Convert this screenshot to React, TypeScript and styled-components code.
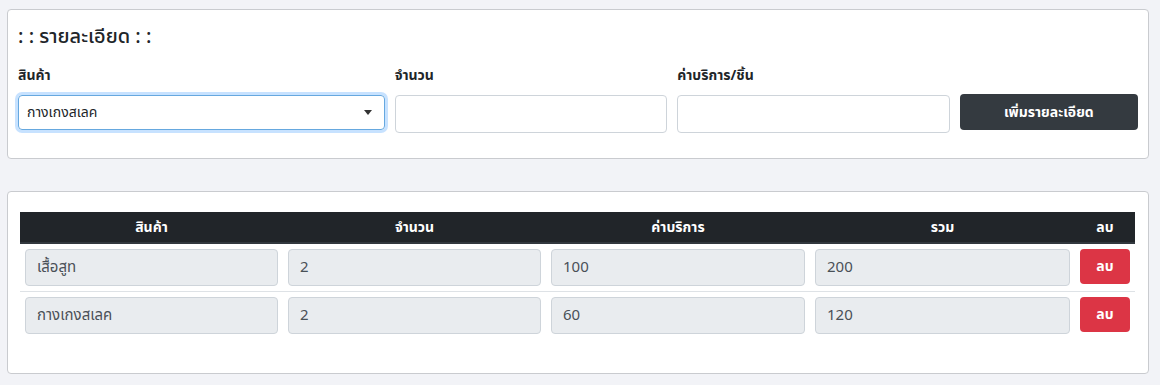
import React from "react";
import styled, { createGlobalStyle } from "styled-components";

const GlobalStyle = createGlobalStyle`
  * { box-sizing: border-box; }
  html, body { margin: 0; padding: 0; background: #f2f3f7; }
  body {
    font-family: "Noto Sans Thai", "Noto Sans", "Liberation Sans", sans-serif;
    color: #212529;
  }
`;

const Page = styled.div`
  padding: 9px 11px 0 7px;
  width: 1160px;
`;

const Card = styled.section<{ $pad: string; $mt?: number }>`
  background: #fff;
  border: 1px solid #c9cbcf;
  border-radius: 4px;
  padding: ${(p) => p.$pad};
  margin-top: ${(p) => p.$mt ?? 0}px;
`;

const Title = styled.h5`
  margin: 0 0 15px 5px;
  font-size: 20px;
  line-height: 27px;
  font-weight: 500;
  color: #212529;
`;

const FormRow = styled.div`
  display: flex;
  align-items: flex-start;
`;

const Col = styled.div<{ $w: number }>`
  flex: 0 0 ${(p) => p.$w}%;
  max-width: ${(p) => p.$w}%;
  padding: 0 5px;
`;

const Label = styled.label`
  display: block;
  font-size: 14px;
  font-weight: 700;
  line-height: 20px;
  margin-bottom: 9px;
  color: #212529;
`;

const SelectBox = styled.div`
  height: 35px;
  border: 1px solid #66a8df;
  border-radius: 4px;
  box-shadow: 0 0 0 3px rgba(0, 123, 255, 0.22);
  display: flex;
  align-items: center;
  padding: 0 12px 0 8px;
  font-size: 14px;
  color: #212529;
`;

const SelectText = styled.span`
  flex: 1;
`;

const Caret = styled.span`
  width: 0;
  height: 0;
  border-left: 4px solid transparent;
  border-right: 4px solid transparent;
  border-top: 5px solid #333;
`;

const TextInput = styled.input`
  display: block;
  width: 100%;
  height: 38px;
  border: 1px solid #ced4da;
  border-radius: 4px;
  background: #fff;
  padding: 0 12px;
  font: inherit;
  font-size: 15px;
  outline: none;
`;

const DarkButton = styled.button`
  display: block;
  width: 100%;
  height: 36px;
  margin-top: 28px;
  border: none;
  border-radius: 4px;
  background: #343a40;
  color: #fff;
  font: inherit;
  font-size: 14px;
  font-weight: 700;
`;

const Table = styled.table`
  width: 1115px;
  border-collapse: collapse;
  table-layout: fixed;
`;

const Th = styled.th<{ $w: number }>`
  width: ${(p) => p.$w}px;
  height: 31px;
  padding: 0 5px;
  background: #212529;
  color: #fff;
  font-size: 14px;
  font-weight: 700;
  text-align: center;
  border-bottom: 2px solid #32383e;
`;

const Tr = styled.tr`
  & + & td {
    border-top: 1px solid #dee2e6;
  }
`;

const Td = styled.td`
  padding: 5px;
  vertical-align: top;
`;

const ReadOnlyInput = styled.div`
  height: 37px;
  border: 1px solid #ced4da;
  border-radius: 4px;
  background: #e9ecef;
  padding: 0 11px;
  display: flex;
  align-items: center;
  font-size: 15px;
  color: #495057;
`;

const DeleteButton = styled.button`
  display: block;
  width: 50px;
  height: 35px;
  border: none;
  border-radius: 4px;
  background: #dc3545;
  color: #fff;
  font: inherit;
  font-size: 14px;
  font-weight: 700;
  padding: 0;
`;

const rows = [
  { name: "เสื้อสูท", qty: "2", price: "100", total: "200" },
  { name: "กางเกงสเลค", qty: "2", price: "60", total: "120" },
];

export default function App() {
  return (
    <>
      <GlobalStyle />
      <Page>
        <Card $pad="14px 5px 25px">
          <Title>: : รายละเอียด : :</Title>
          <FormRow>
            <Col $w={33.3333}>
              <Label>สินค้า</Label>
              <SelectBox>
                <SelectText>กางเกงสเลค</SelectText>
                <Caret />
              </SelectBox>
            </Col>
            <Col $w={25}>
              <Label>จำนวน</Label>
              <TextInput />
            </Col>
            <Col $w={25}>
              <Label>ค่าบริการ/ชิ้น</Label>
              <TextInput />
            </Col>
            <Col $w={16.6667}>
              <DarkButton>เพิ่มรายละเอียด</DarkButton>
            </Col>
          </FormRow>
        </Card>
        <Card $pad="20px 13px 34px 12px" $mt={32}>
          <Table>
            <thead>
              <tr>
                <Th $w={263}>สินค้า</Th>
                <Th $w={263}>จำนวน</Th>
                <Th $w={264}>ค่าบริการ</Th>
                <Th $w={265}>รวม</Th>
                <Th $w={60}>ลบ</Th>
              </tr>
            </thead>
            <tbody>
              {rows.map((r) => (
                <Tr key={r.name}>
                  <Td><ReadOnlyInput>{r.name}</ReadOnlyInput></Td>
                  <Td><ReadOnlyInput>{r.qty}</ReadOnlyInput></Td>
                  <Td><ReadOnlyInput>{r.price}</ReadOnlyInput></Td>
                  <Td><ReadOnlyInput>{r.total}</ReadOnlyInput></Td>
                  <Td><DeleteButton>ลบ</DeleteButton></Td>
                </Tr>
              ))}
            </tbody>
          </Table>
        </Card>
      </Page>
    </>
  );
}
